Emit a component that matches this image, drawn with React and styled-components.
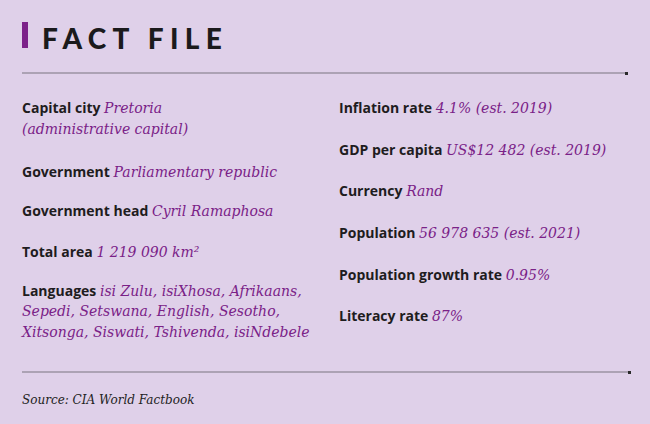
import styled, { createGlobalStyle } from 'styled-components';

const GlobalStyle = createGlobalStyle`
  html, body { margin: 0; padding: 0; background: #dfd0e9; }
`;

const Page = styled.div`
  width: 650px;
  height: 424px;
  box-sizing: border-box;
  padding: 22px 22px 0 22px;
  background: #dfd0e9;
  display: flex;
  flex-direction: column;
`;

const Title = styled.h1`
  margin: 0;
  display: flex;
  align-items: center;
  gap: 14px;
  height: 26px;
  font-family: "Lato", "Noto Sans", sans-serif;
  font-weight: 900;
  font-size: 28px;
  letter-spacing: 6.3px;
  color: #1b1a1c;
  line-height: 1;
`;

const TitleText = styled.span`
  padding-top: 5px;
`;

const Bar = styled.span`
  width: 6px;
  height: 26px;
  background: #7c2189;
`;

const Rule = styled.div`
  position: relative;
  height: 2px;
  width: ${(p) => p.width}px;
  margin-top: ${(p) => p.top}px;
  background: #aca2b4;
  &::after {
    content: '';
    position: absolute;
    right: -2px;
    top: 0;
    width: 3px;
    height: 3px;
    background: #2a2a2a;
  }
`;

const Columns = styled.div`
  display: grid;
  grid-template-columns: 317px 1fr;
  margin-top: 24px;
`;

const Column = styled.div`
  display: flex;
  flex-direction: column;
  gap: ${(p) => p.gap}px;
`;

const Item = styled.p`
  margin: 0 0 ${(p) => p.extra || 0}px 0;
  font-family: "Open Sans", "Noto Sans", sans-serif;
  font-weight: 700;
  font-size: 14px;
  line-height: 20.5px;
  color: #1e1c20;
`;

const Value = styled.span`
  font-family: "DejaVu Serif", serif;
  font-style: italic;
  font-weight: 400;
  font-size: 14px;
  color: #7a2187;
`;

const Source = styled.p`
  margin: 20px 0 0 0;
  font-family: "DejaVu Serif", serif;
  font-style: italic;
  font-size: 12px;
  color: #222;
`;

const left = [
  ['Capital city', <>Pretoria<br />(administrative capital)</>, 4],
  ['Government', 'Parliamentary republic'],
  ['Government head', 'Cyril Ramaphosa', 2],
  ['Total area', <>1 219 090 km²</>],
  ['Languages', <>isi Zulu, isiXhosa, Afrikaans,<br />Sepedi, Setswana, English, Sesotho,<br />Xitsonga, Siswati, Tshivenda, isiNdebele</>],
];

const right = [
  ['Inflation rate', '4.1% (est. 2019)'],
  ['GDP per capita', 'US$12 482 (est. 2019)'],
  ['Currency', 'Rand'],
  ['Population', '56 978 635 (est. 2021)'],
  ['Population growth rate', '0.95%'],
  ['Literacy rate', '87%'],
];

const App = () => (
  <Page>
    <GlobalStyle />
    <Title><Bar /><TitleText>FACT FILE</TitleText></Title>
    <Rule width={604} top={24} />
    <Columns>
      <Column gap={18.5}>
        {left.map(([k, v, extra]) => (
          <Item key={k} extra={extra}>{k} <Value>{v}</Value></Item>
        ))}
      </Column>
      <Column gap={21.2}>
        {right.map(([k, v]) => (
          <Item key={k}>{k} <Value>{v}</Value></Item>
        ))}
      </Column>
    </Columns>
    <Rule width={607} top={29} />
    <Source>Source: CIA World Factbook</Source>
  </Page>
);

export default App;
